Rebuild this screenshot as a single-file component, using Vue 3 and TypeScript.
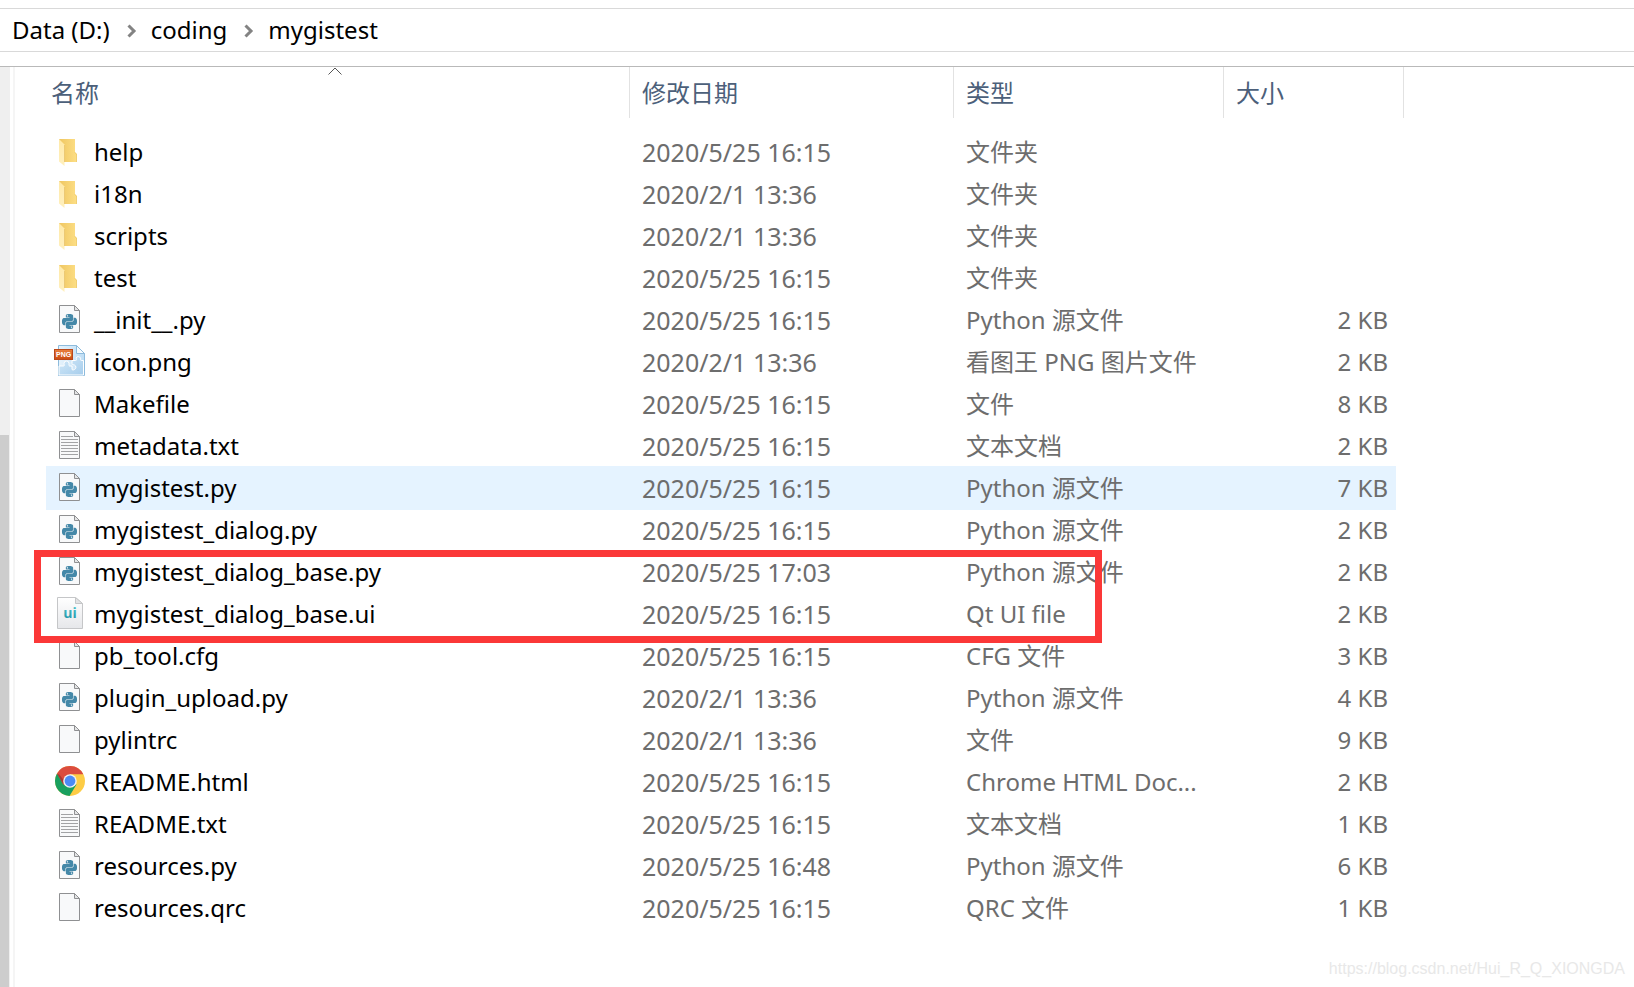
<script setup lang="ts">
type IconName = 'folder' | 'python' | 'png' | 'blank' | 'text' | 'ui' | 'chrome'

interface FileRow {
  name: string
  icon: IconName
  date: string
  type: string
  size: string
  hovered?: boolean
}

const path: string[] = ['Data (D:)', 'coding', 'mygistest']

const files: FileRow[] = [
  { name: 'help', icon: 'folder', date: '2020/5/25 16:15', type: '文件夹', size: '' },
  { name: 'i18n', icon: 'folder', date: '2020/2/1 13:36', type: '文件夹', size: '' },
  { name: 'scripts', icon: 'folder', date: '2020/2/1 13:36', type: '文件夹', size: '' },
  { name: 'test', icon: 'folder', date: '2020/5/25 16:15', type: '文件夹', size: '' },
  { name: '__init__.py', icon: 'python', date: '2020/5/25 16:15', type: 'Python 源文件', size: '2 KB' },
  { name: 'icon.png', icon: 'png', date: '2020/2/1 13:36', type: '看图王 PNG 图片文件', size: '2 KB' },
  { name: 'Makefile', icon: 'blank', date: '2020/5/25 16:15', type: '文件', size: '8 KB' },
  { name: 'metadata.txt', icon: 'text', date: '2020/5/25 16:15', type: '文本文档', size: '2 KB' },
  { name: 'mygistest.py', icon: 'python', date: '2020/5/25 16:15', type: 'Python 源文件', size: '7 KB', hovered: true },
  { name: 'mygistest_dialog.py', icon: 'python', date: '2020/5/25 16:15', type: 'Python 源文件', size: '2 KB' },
  { name: 'mygistest_dialog_base.py', icon: 'python', date: '2020/5/25 17:03', type: 'Python 源文件', size: '2 KB' },
  { name: 'mygistest_dialog_base.ui', icon: 'ui', date: '2020/5/25 16:15', type: 'Qt UI file', size: '2 KB' },
  { name: 'pb_tool.cfg', icon: 'blank', date: '2020/5/25 16:15', type: 'CFG 文件', size: '3 KB' },
  { name: 'plugin_upload.py', icon: 'python', date: '2020/2/1 13:36', type: 'Python 源文件', size: '4 KB' },
  { name: 'pylintrc', icon: 'blank', date: '2020/2/1 13:36', type: '文件', size: '9 KB' },
  { name: 'README.html', icon: 'chrome', date: '2020/5/25 16:15', type: 'Chrome HTML Doc...', size: '2 KB' },
  { name: 'README.txt', icon: 'text', date: '2020/5/25 16:15', type: '文本文档', size: '1 KB' },
  { name: 'resources.py', icon: 'python', date: '2020/5/25 16:48', type: 'Python 源文件', size: '6 KB' },
  { name: 'resources.qrc', icon: 'blank', date: '2020/5/25 16:15', type: 'QRC 文件', size: '1 KB' },
]
</script>

<template>
  <div class="explorer">
    <svg class="sprites" aria-hidden="true">
      <defs>
        <linearGradient id="folder-back" x1="0" x2="1">
          <stop offset="0" stop-color="#efc661" />
          <stop offset="1" stop-color="#fddf86" />
        </linearGradient>
        <linearGradient id="folder-front" x1="0" x2="0" y1="0" y2="1">
          <stop offset="0" stop-color="#ffe9a8" />
          <stop offset="1" stop-color="#fff0be" />
        </linearGradient>
        <linearGradient id="page-blue" x1="0" x2="1" y1="0" y2="0">
          <stop offset="0" stop-color="#e6f3fc" />
          <stop offset="1" stop-color="#bfdef5" />
        </linearGradient>
        <linearGradient id="puzzle-blue" x1="0" x2="1" y1="0" y2="1">
          <stop offset="0" stop-color="#d3e9f8" />
          <stop offset="1" stop-color="#a6cdec" />
        </linearGradient>
        <linearGradient id="tag-orange" x1="0" x2="0" y1="0" y2="1">
          <stop offset="0" stop-color="#e9803f" />
          <stop offset="1" stop-color="#cb4a12" />
        </linearGradient>
        <linearGradient id="page-grey" x1="0" x2="0" y1="0" y2="1">
          <stop offset="0" stop-color="#ffffff" />
          <stop offset="1" stop-color="#e6e7ea" />
        </linearGradient>
        <linearGradient id="ui-teal" x1="0" x2="0" y1="0" y2="1">
          <stop offset="0" stop-color="#51ccd0" />
          <stop offset="1" stop-color="#1d8ea6" />
        </linearGradient>
      </defs>
      <symbol id="icon-folder" viewBox="0 0 32 32">
        <path d="M5 4h16v13l2 2v8H9z" fill="url(#folder-back)" />
        <path d="M20.500 17.500l2 1.500v8" fill="none" stroke="#e8c468" stroke-width="0.600" />
        <path d="M5 4l5.500 5.500V31L5 26.500z" fill="url(#folder-front)" />
        <path d="M10.500 10v17" stroke="#e6c068" stroke-width="0.700" />
      </symbol>
      <symbol id="icon-blank" viewBox="0 0 32 32">
        <path d="M5.500 2.500h15l5 5v22h-20z" fill="#f8f9fa" stroke="#8f9092" />
        <path d="M20.500 2.500v5h5z" fill="#e4e5e6" stroke="#8f9092" />
      </symbol>
      <symbol id="icon-text" viewBox="0 0 32 32">
        <use href="#icon-blank" />
        <path
          d="M7 7.500h12M7 10.500h17M7 13.500h17M7 16.500h17M7 19.500h17M7 22.500h17M7 25.500h17"
          stroke="#a2a3a5"
        />
      </symbol>
      <symbol id="icon-python" viewBox="0 0 32 32">
        <use href="#icon-blank" />
        <path
          transform="translate(8 11) scale(0.625)"
          fill="#4488a8"
          d="M14.250.18l.9.2.73.26.59.3.45.32.34.34.25.34.16.33.1.3.04.26.02.2-.01.13V8.5l-.05.63-.13.55-.21.46-.26.38-.3.31-.33.25-.35.19-.35.14-.33.1-.3.07-.26.04-.21.02H8.77l-.69.05-.59.14-.5.22-.41.27-.33.32-.27.35-.2.36-.15.37-.1.35-.07.32-.04.27-.02.21v3.06H3.17l-.21-.03-.28-.07-.32-.12-.35-.18-.36-.26-.36-.36-.35-.46-.32-.59-.28-.73-.21-.88-.14-1.05-.05-1.23.06-1.22.16-1.04.24-.87.32-.71.36-.57.4-.44.42-.33.42-.24.4-.16.36-.1.32-.05.24-.01h.16l.06.01h8.16v-.83H6.18l-.01-2.75-.02-.37.05-.34.11-.31.17-.28.25-.26.31-.23.38-.2.44-.18.51-.15.58-.12.64-.1.71-.06.77-.04.84-.02 1.27.05zm-6.3 1.98l-.23.33-.08.41.08.41.23.34.33.22.41.09.41-.09.33-.22.23-.34.08-.41-.08-.41-.23-.33-.33-.22-.41-.09-.41.09zm13.09 3.95l.28.06.32.12.35.18.36.27.36.35.35.47.32.59.28.73.21.88.14 1.04.05 1.23-.06 1.23-.16 1.04-.24.86-.32.71-.36.57-.4.45-.42.33-.42.24-.4.16-.36.09-.32.05-.24.02-.16-.01h-8.22v.82h5.84l.01 2.76.02.36-.05.34-.11.31-.17.29-.25.25-.31.24-.38.2-.44.17-.51.15-.58.13-.64.09-.71.07-.77.04-.84.01-1.27-.04-1.07-.14-.9-.2-.73-.25-.59-.3-.45-.33-.34-.34-.25-.34-.16-.33-.1-.3-.04-.25-.02-.2.01-.13v-5.34l.05-.64.13-.54.21-.46.26-.38.3-.32.33-.24.35-.2.35-.14.33-.1.3-.06.26-.04.21-.02.13-.01h5.84l.69-.05.59-.14.5-.21.41-.28.33-.32.27-.35.2-.36.15-.36.1-.35.07-.32.04-.28.02-.21V6.070h2.090l.14.01zm-6.470 14.250l-.23.33-.08.41.08.41.23.33.33.23.41.08.41-.08.33-.23.23-.33.08-.41-.08-.41-.23-.33-.33-.23-.41-.08-.41.08z"
        />
      </symbol>
      <symbol id="icon-png" viewBox="0 0 32 32">
        <path d="M4.500 0.500h18l8 8v22h-26z" fill="url(#page-blue)" stroke="#8dbbdc" />
        <path
          d="M5 21h4.500c1.500 0 .5-1.500.5-2.500a2.500 2.500 0 0 1 5 0c0 1-.5 2 .5 2.500h2.500v3c0 1.500 1.500 1 2.500 .5a2.500 2.500 0 0 0 0-4.500c-1-.5-2.500 0-2.500-1.500v-3h3.500c1.500 0 1-1.500 .5-2.500a2.500 2.500 0 0 1 4.500 0c.5 1-.5 2.500 1 2.500h2V30H5z"
          fill="url(#puzzle-blue)"
          stroke="#fff"
        />
        <path d="M22.500 0.500v8h8z" fill="#f6fbfe" stroke="#8dbbdc" />
        <rect x="0.500" y="4.500" width="18" height="10" fill="url(#tag-orange)" stroke="#b9481a" />
      </symbol>
      <symbol id="icon-ui" viewBox="0 0 32 32">
        <path d="M3.500 0.500h18l7 6v25h-25z" fill="url(#page-grey)" stroke="#c5c6c8" />
        <path d="M21.500 0.500v6h7z" fill="#e3e3e5" stroke="#c5c6c8" />
      </symbol>
      <symbol id="icon-chrome" viewBox="0 0 32 32">
        <circle cx="16" cy="16" r="15" fill="#fdcc45" />
        <path d="M16 16L3 8.500A15 15 0 0 0 15.500 31L22.500 19.500z" fill="#19a05f" />
        <path d="M16 16L9.500 19.700 3 8.500A15 15 0 0 1 29.300 9.200H16z" fill="#db4c3f" />
        <path d="M9.500 19.700L3.300 8.900l2 .5 5.500 7z" fill="#a83a33" />
        <circle cx="16" cy="16" r="6.800" fill="#f1f1f1" />
        <circle cx="16" cy="16" r="5.400" fill="#4c8bf5" />
      </symbol>
    </svg>

    <nav class="address" aria-label="路径">
      <template v-for="(part, i) in path" :key="part">
        <svg v-if="i > 0" class="crumb-arrow" viewBox="0 0 10 14" aria-hidden="true">
          <path d="M1.500 1.500L7 7l-5.500 5.500" fill="none" stroke="#838383" stroke-width="3" />
        </svg>
        <a class="crumb" href="#">{{ part }}</a>
      </template>
    </nav>

    <div class="body">
      <div class="rail" aria-hidden="true"><div class="thumb"></div></div>
      <main class="pane">
        <div class="list">
          <table class="files">
            <colgroup>
              <col />
              <col class="col-date" />
              <col class="col-type" />
              <col class="col-size" />
              <col class="col-end" />
            </colgroup>
            <thead>
              <tr>
                <th scope="col" aria-sort="ascending">
                  <button type="button" class="head head-name">
                    <svg class="sort" viewBox="0 0 14 8" aria-hidden="true">
                      <path d="M0.500 7.500L7 1l6.500 6.500" fill="none" stroke="#555" />
                    </svg>
                    名称
                  </button>
                </th>
                <th scope="col"><button type="button" class="head">修改日期</button></th>
                <th scope="col"><button type="button" class="head">类型</button></th>
                <th scope="col" colspan="2"><button type="button" class="head">大小</button></th>
              </tr>
            </thead>
            <tbody>
              <tr v-for="file in files" :key="file.name" :class="{ hovered: file.hovered }">
                <td class="name">
                  <div class="entry">
                    <svg class="icon" aria-hidden="true">
                      <use :href="'#icon-' + file.icon" />
                      <text v-if="file.icon === 'png'" x="2" y="12" class="png-label">PNG</text>
                      <text v-if="file.icon === 'ui'" x="16" y="21" text-anchor="middle" class="ui-label">ui</text>
                    </svg>
                    <span>{{ file.name }}</span>
                  </div>
                </td>
                <td class="date">{{ file.date }}</td>
                <td>{{ file.type }}</td>
                <td class="size">{{ file.size }}</td>
              </tr>
            </tbody>
          </table>
          <div class="marker" aria-hidden="true"></div>
        </div>
      </main>
    </div>
    <div class="watermark">https://blog.csdn.net/Hui_R_Q_XIONGDA</div>
  </div>
</template>

<style>
body {
  margin: 0;
  background: #fff;
}
</style>

<style scoped>
.explorer {
  position: relative;
  display: flex;
  flex-direction: column;
  box-sizing: border-box;
  min-height: 100vh;
  padding-top: 8px;
  background: #fff;
  color: #000;
  font-family: "Noto Sans", "Noto Sans CJK SC", sans-serif;
  font-size: 24px;
  line-height: 32px;
}

.sprites {
  position: absolute;
  width: 0;
  height: 0;
}

.png-label {
  fill: #fff;
  font: bold 7px "Liberation Sans", sans-serif;
}

.ui-label {
  fill: url(#ui-teal);
  font: bold 14px "Open Sans", sans-serif;
}

.address {
  display: flex;
  align-items: center;
  height: 42px;
  padding-left: 12px;
  border-top: 1px solid #d9d9d9;
  border-bottom: 1px solid #d9d9d9;
}

.crumb {
  color: #000;
  text-decoration: none;
}

.crumb-arrow {
  width: 10px;
  height: 14px;
  margin: 2px 14px 0 17px;
}

.body {
  display: flex;
  flex: 1;
  margin-top: 14px;
  border-top: 1px solid #b9b9b9;
}

.rail {
  display: flex;
  flex-direction: column;
  justify-content: flex-end;
  width: 10px;
  margin-right: 3px;
  background: #efefef;
}

.thumb {
  width: 9px;
  height: 60%;
  background: #cdcdcd;
}

.pane {
  flex: 1;
  padding: 0 230px 0 31px;
  border-left: 2px solid #f5f5f5;
}

.list {
  position: relative;
}

.files {
  width: 100%;
  border-collapse: collapse;
  table-layout: fixed;
}

.col-date {
  width: 324px;
}

.col-type {
  width: 270px;
}

.col-size {
  width: 172px;
}

.col-end {
  width: 8px;
}

th {
  height: 64px;
  padding: 0;
  vertical-align: top;
}

.head {
  position: relative;
  display: block;
  width: 100%;
  height: 51px;
  padding: 0 12px;
  border: 0;
  border-right: 1px solid #e2e2e2;
  background: none;
  color: #4c607a;
  font: inherit;
  font-weight: 400;
  text-align: left;
}

.head-name {
  padding-left: 5px;
}

.sort {
  position: absolute;
  top: 0;
  left: calc(50% - 10px);
  width: 14px;
  height: 8px;
}

td {
  height: 42px;
  padding: 0 12px;
  color: #6d6d6d;
  white-space: nowrap;
}

td.name {
  padding: 0 8px;
  color: #000;
}

td.date {
  font-size: 25px;
}

td.size {
  padding: 0 8px;
  text-align: right;
}

.hovered td {
  background: #e5f3ff;
  box-shadow: 0 1px #e5f3ff, 0 -1px #e5f3ff;
}

.entry {
  display: flex;
  align-items: center;
  gap: 8px;
}

.icon {
  flex: none;
  width: 32px;
  height: 32px;
  margin-bottom: 2px;
}

.marker {
  position: absolute;
  top: 483px;
  right: 302px;
  left: -12px;
  box-sizing: border-box;
  height: 93px;
  border: 7px solid #fb3838;
  pointer-events: none;
}

.watermark {
  position: absolute;
  right: 9px;
  bottom: 8px;
  color: #e8e8e8;
  font: 16px/20px "Liberation Sans", sans-serif;
}
</style>
